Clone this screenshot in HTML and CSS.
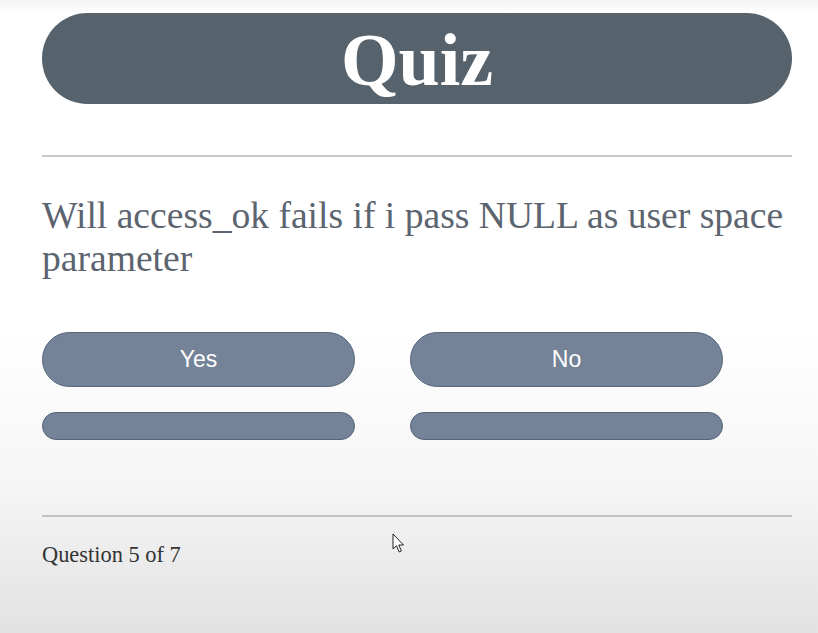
FILE: index.html
```html
<!DOCTYPE html>
<html lang="en">
<head>
<meta charset="utf-8">
<title>Quiz</title>
<link rel="stylesheet" href="styles.css">
</head>
<body>
<main class="quiz">
  <header class="quiz-header"><h1 class="quiz-title">Quiz</h1></header>
  <hr class="divider">
  <p class="question">Will access_ok fails if i pass NULL as user space parameter</p>
  <div class="answers">
    <button class="answer">Yes</button>
    <button class="answer">No</button>
    <button class="answer answer-empty"></button>
    <button class="answer answer-empty"></button>
  </div>
  <hr class="divider divider-bottom">
  <p class="progress">Question 5 of 7</p>
</main>
<svg class="cursor" width="14" height="22" viewBox="0 0 14 22" aria-hidden="true">
  <path d="M1 1 L1 16 L4.5 12.8 L7.2 19 L9.4 18 L6.8 12 L11.5 12 Z" fill="#fff" stroke="#222" stroke-width="1" stroke-linejoin="round"/>
</svg>
</body>
</html>
```

FILE: styles.css
```css
html, body {
  margin: 0;
  padding: 0;
  height: 100%;
}

body {
  background: linear-gradient(to bottom, #f4f4f4 0px, #ffffff 14px, #ffffff 330px, #f6f6f6 480px, #e2e2e2 633px);
  font-family: "Liberation Serif", "Times New Roman", serif;
  overflow: hidden;
}

.quiz {
  width: 750px;
  padding: 13px 0 0 42px;
  display: flex;
  flex-direction: column;
}

.quiz-header {
  height: 91px;
  border-radius: 46px;
  background: #56626c;
  display: flex;
  align-items: center;
  justify-content: center;
}

.quiz-title {
  margin: 0;
  color: #ffffff;
  font-family: "Liberation Serif", "Times New Roman", serif;
  font-weight: bold;
  font-size: 74px;
  line-height: 1;
  padding-top: 2px;
}

.divider {
  margin: 51px 0 0;
  border: 0;
  height: 2px;
  background: #c9c9c9;
}

.question {
  margin: 37px 0 0;
  font-size: 37.6px;
  line-height: 43px;
  color: #5b646f;
}

.answers {
  margin-top: 52px;
  display: grid;
  grid-template-columns: 313px 313px;
  grid-template-rows: 55px 28px;
  column-gap: 55px;
  row-gap: 25px;
}

.answer {
  margin: 0;
  padding: 0;
  border: 1px solid #56657a;
  border-radius: 28px;
  background: #748397;
  color: #ffffff;
  font-family: "Liberation Sans", Arial, sans-serif;
  font-size: 23px;
}

.answer-empty {
  border-radius: 14px;
}

.divider-bottom {
  margin-top: 75px;
  background: #c2c2c2;
}

.progress {
  margin: 25px 0 0;
  font-size: 22.4px;
  line-height: 26px;
  color: #333333;
}

.cursor {
  position: absolute;
  left: 392px;
  top: 533px;
}
```
